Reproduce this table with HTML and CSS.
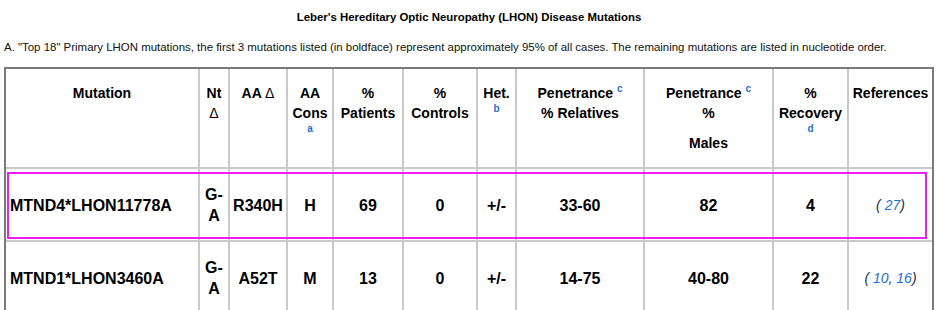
FILE: index.html
```html
<!DOCTYPE html>
<html lang="en">
<head>
<meta charset="utf-8">
<title>LHON Disease Mutations</title>
<link rel="stylesheet" href="styles.css">
</head>
<body>
<div class="page">
  <div class="title">Leber's Hereditary Optic Neuropathy (LHON) Disease Mutations</div>
  <div class="intro">A. "Top 18" Primary LHON mutations, the first 3 mutations listed (in boldface) represent approximately 95% of all cases. The remaining mutations are listed in nucleotide order.</div>
  <div class="table-wrap">
    <table class="mut-table">
      <colgroup>
        <col class="c1"><col class="c2"><col class="c3"><col class="c4"><col class="c5"><col class="c6"><col class="c7"><col class="c8"><col class="c9"><col class="c10"><col class="c11">
      </colgroup>
      <thead>
        <tr>
          <th>Mutation</th>
          <th>Nt<br><span class="delta">Δ</span></th>
          <th>AA <span class="delta">Δ</span></th>
          <th>AA<br>Cons<br><sup class="note">a</sup></th>
          <th>%<br>Patients</th>
          <th>%<br>Controls</th>
          <th>Het.<br><sup class="note">b</sup></th>
          <th>Penetrance <sup class="note">c</sup><br>% Relatives</th>
          <th>Penetrance <sup class="note">c</sup><br>%<div class="males">Males</div></th>
          <th>%<br>Recovery<br><sup class="note">d</sup></th>
          <th class="last">References</th>
        </tr>
      </thead>
      <tbody>
        <tr>
          <td class="name">MTND4*LHON11778A</td>
          <td>G-A</td>
          <td>R340H</td>
          <td>H</td>
          <td>69</td>
          <td>0</td>
          <td>+/-</td>
          <td>33-60</td>
          <td>82</td>
          <td>4</td>
          <td class="last refs">( <a class="ref">27</a>)</td>
        </tr>
        <tr>
          <td class="name">MTND1*LHON3460A</td>
          <td>G-A</td>
          <td>A52T</td>
          <td>M</td>
          <td>13</td>
          <td>0</td>
          <td>+/-</td>
          <td>14-75</td>
          <td>40-80</td>
          <td>22</td>
          <td class="last refs">( <a class="ref">10</a>, <a class="ref">16</a>)</td>
        </tr>
      </tbody>
    </table>
    <div class="highlight"></div>
  </div>
</div>
</body>
</html>
```
FILE: styles.css
```css
html, body {
  margin: 0;
  padding: 0;
  background: #ffffff;
}

body {
  font-family: "Liberation Sans", Arial, sans-serif;
  color: #000000;
}

.page {
  padding: 0 4px;
}

.title {
  margin-top: 10px;
  font-size: 11.4px;
  line-height: 14px;
  font-weight: bold;
  text-align: center;
  width: 930px;
}

.intro {
  margin-top: 16px;
  font-size: 11.45px;
  line-height: 14px;
  color: #111;
}

.table-wrap {
  position: relative;
  margin-top: 13px;
  width: 930px;
}

.mut-table {
  width: 930px;
  table-layout: fixed;
  border-collapse: separate;
  border-spacing: 0;
  border: 2px solid #7a7a7a;
}

.c1 { width: 194px; }
.c2 { width: 30px; }
.c3 { width: 58px; }
.c4 { width: 46px; }
.c5 { width: 70px; }
.c6 { width: 74px; }
.c7 { width: 39px; }
.c8 { width: 128px; }
.c9 { width: 129px; }
.c10 { width: 75px; }
.c11 { width: 83px; }

.mut-table th,
.mut-table td {
  box-sizing: border-box;
  border-right: 2px solid #c9c9c9;
  border-bottom: 2px solid #c9c9c9;
  text-align: center;
  padding-left: 1px;
  padding-right: 1px;
}

.mut-table .last {
  border-right: none;
}

.mut-table th {
  vertical-align: top;
  font-size: 14px;
  line-height: 20px;
  font-weight: bold;
  padding-top: 14px;
  padding-bottom: 14px;
}

.delta {
  font-weight: normal;
}

.males {
  margin-top: 10px;
}

.note {
  color: #1f6fd6;
  font-size: 10px;
  font-weight: bold;
  line-height: 0;
  vertical-align: 6px;
}

.mut-table td {
  vertical-align: middle;
  font-size: 16px;
  line-height: 21px;
  font-weight: bold;
  padding-top: 15px;
  padding-bottom: 14px;
}

.mut-table td.name {
  text-align: left;
  padding-left: 4px;
}

.mut-table td.refs {
  font-size: 14px;
  font-weight: normal;
  font-style: italic;
  color: #1a2a4a;
}

.ref {
  color: #1f6fd6;
  text-decoration: none;
}

.highlight {
  position: absolute;
  left: 3px;
  top: 105px;
  width: 920px;
  height: 67px;
  box-sizing: border-box;
  border: 2px solid #f01cf0;
  pointer-events: none;
}
```
